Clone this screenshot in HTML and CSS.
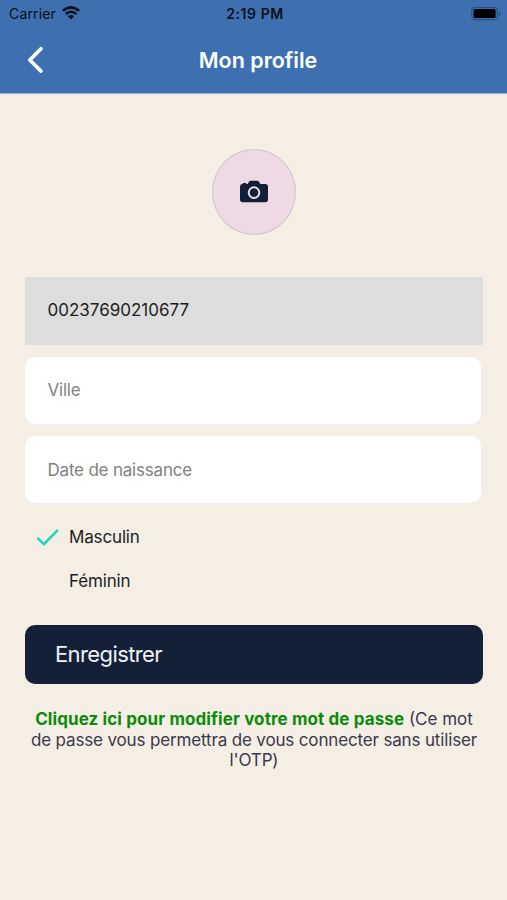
FILE: index.html
```html
<!DOCTYPE html>
<html lang="fr">
<head>
<meta charset="utf-8">
<title>Mon profile</title>
<link rel="stylesheet" href="styles.css">
</head>
<body>
<header class="header">
  <div class="status">
    <div class="carrier"><span>Carrier</span>
      <svg class="wifi" width="18" height="14" viewBox="0 0 18 14" fill="none" stroke="#07101b" stroke-width="2.6"><path d="M.8 4.8Q9-2.2 17.2 4.8"/><path d="M3.7 8Q9 3.5 14.3 8"/><path d="M5.9 10.2Q9 7.6 12.1 10.2L9 13.5Z" fill="#07101b" stroke="none"/></svg>
    </div>
    <div class="clock">2:19 PM</div>
    <svg class="battery" width="31" height="14" viewBox="0 0 31 14"><rect x="1.8" y=".3" width="25.6" height="12.4" rx="3.6" fill="none" stroke="#28507f" stroke-width="1.2"/><rect x="3.6" y="2" width="22" height="9" rx="1.6" fill="#000"/><path d="M28.9 4.5v4.4q1.6-.7 1.6-2.2T28.9 4.5z" fill="#28507f"/></svg>
  </div>
  <nav class="bar">
    <svg class="back" width="18" height="28" viewBox="0 0 18 28" fill="none" stroke="#fff" stroke-width="3.6" stroke-linecap="round" stroke-linejoin="round"><path d="M14 2.7 2.8 14 14 25.1"/></svg>
    <h1 class="title">Mon profile</h1>
  </nav>
</header>
<main class="content">
  <div class="avatar">
    <svg width="30" height="24" viewBox="0 0 30 24"><path d="M3.8 4.1V3h3.4v1.1h1.5L10 1.8Q10.5.8 11.6.8h6.8q1.1 0 1.6 1l1.3 2.3h4.9q2.8 0 2.8 2.8v12.6q0 2.7-2.8 2.7H3.8Q1 22.2 1 19.5V6.9q0-2.5 2.8-2.8z" fill="#121f37"/><circle cx="15" cy="12.6" r="5.3" fill="none" stroke="#eedce5" stroke-width="2"/></svg>
  </div>
  <form class="form">
    <div class="field field-locked">00237690210677</div>
    <div class="field field-city">Ville</div>
    <div class="field">Date de naissance</div>
    <div class="options">
      <div class="option"><svg class="check" width="24" height="20" viewBox="0 0 24 20" fill="none" stroke="#1cd6bd" stroke-width="2.5"><path d="M2.5 10.9 8.8 17.2 23 2.9"/></svg><span>Masculin</span></div>
      <div class="option"><span class="check"></span><span>Féminin</span></div>
    </div>
    <button class="save" type="button">Enregistrer</button>
  </form>
  <p class="note"><b class="link">Cliquez ici pour modifier votre mot de passe</b> <span>(Ce mot</span><br><span class="detail">de passe vous permettra de vous connecter sans utiliser</span><br><span class="detail">l'OTP)</span></p>
</main>
</body>
</html>
```
FILE: styles.css
```css
* { box-sizing: border-box; }
body {
  margin: 0;
  height: 900px;
  background: #f5eee5;
  font-family: Inter, "Liberation Sans", sans-serif;
  font-size: 17px;
  color: #1d1d1f;
}
.header { height: 94px; background: #3e6fb0; border-bottom: 1px solid #9cafca; }
.status {
  display: grid;
  grid-template-columns: 1fr auto 1fr;
  height: 27px;
  padding: 0 6px 0 9px;
  align-items: center;
  font-size: 14px;
  line-height: 27px;
  color: #07101b;
}
.carrier { display: flex; align-items: center; gap: 6px; letter-spacing: .15px; }
.wifi { margin-top: -1px; }
.clock { font-weight: 600; letter-spacing: .55px; }
.battery { justify-self: end; }
.bar {
  display: grid;
  grid-template-columns: 64px 1fr 55px;
  height: 65px;
  align-items: center;
}
.back { margin-left: 27px; }
.title { margin: 0; text-align: center; font-size: 21.5px; line-height: 26px; font-weight: 600; letter-spacing: 0; color: #fff; }
.content { padding: 55px 24px 0 25px; }
.avatar {
  display: flex;
  align-items: center;
  justify-content: center;
  width: 84px;
  height: 86px;
  margin: 0 auto 42px 187px;
  border: 1px solid #cfc4cb;
  border-radius: 50%;
  background: #eddae4;
}
.form { display: flex; flex-direction: column; }
.field {
  width: 456px;
  height: 67px;
  margin-bottom: 12px;
  padding-left: 22.5px;
  border-radius: 10px;
  background: #fff;
  color: #808080;
  line-height: 68px;
  letter-spacing: -.2px;
}
.field-city { line-height: 67px; }
.field-locked { width: 458px; height: 68px; border-radius: 0; background: #ddd; color: #1d1d1f; line-height: 66px; letter-spacing: 0; }
.option { display: flex; align-items: center; height: 44px; color: #1d1d1f; letter-spacing: -.15px; }
.check { width: 24px; height: 20px; margin: 0 10px; }
.save {
  width: 458px;
  height: 59px;
  margin: 22px 0 0;
  padding: 0 30px;
  border: 0;
  border-radius: 10px;
  background: #142037;
  color: #eef3fb;
  font: 400 22px/59px Inter, "Liberation Sans", sans-serif;
  letter-spacing: -.6px;
  text-align: left;
}
.note { margin: 25px 0 0; width: 458px; text-align: center; line-height: 20.6px; white-space: nowrap; color: #39384c; }
.link { font-weight: 700; letter-spacing: .1px; color: #0b8a0b; }
.detail { letter-spacing: -.15px; }
```
